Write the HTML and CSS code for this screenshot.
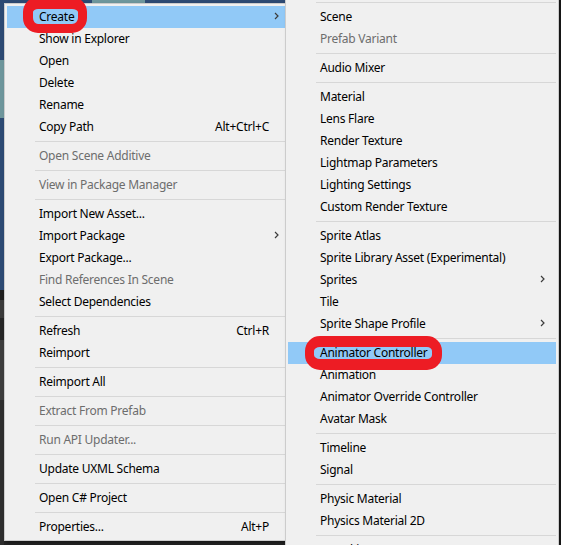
FILE: index.html
```html
<!DOCTYPE html>
<html>
<head>
<meta charset="utf-8">
<link rel="stylesheet" href="styles.css">
</head>
<body>
<div class="screen">
  <div class="menu main">
    <div class="item hl"><span class="label">Create</span><svg class="arrow" width="5" height="8" viewBox="0 0 5 8"><polyline points="1,1 4,4 1,7"/></svg></div>
    <div class="item"><span class="label">Show in Explorer</span></div>
    <div class="item"><span class="label">Open</span></div>
    <div class="item"><span class="label">Delete</span></div>
    <div class="item"><span class="label">Rename</span></div>
    <div class="item"><span class="label">Copy Path</span><span class="key">Alt+Ctrl+C</span></div>
    <div class="sep"></div>
    <div class="item off"><span class="label">Open Scene Additive</span></div>
    <div class="sep"></div>
    <div class="item off"><span class="label">View in Package Manager</span></div>
    <div class="sep"></div>
    <div class="item"><span class="label">Import New Asset...</span></div>
    <div class="item"><span class="label">Import Package</span><svg class="arrow" width="5" height="8" viewBox="0 0 5 8"><polyline points="1,1 4,4 1,7"/></svg></div>
    <div class="item"><span class="label">Export Package...</span></div>
    <div class="item off"><span class="label">Find References In Scene</span></div>
    <div class="item"><span class="label">Select Dependencies</span></div>
    <div class="sep"></div>
    <div class="item"><span class="label">Refresh</span><span class="key">Ctrl+R</span></div>
    <div class="item"><span class="label">Reimport</span></div>
    <div class="sep"></div>
    <div class="item"><span class="label">Reimport All</span></div>
    <div class="sep"></div>
    <div class="item off"><span class="label">Extract From Prefab</span></div>
    <div class="sep"></div>
    <div class="item off"><span class="label">Run API Updater...</span></div>
    <div class="sep"></div>
    <div class="item"><span class="label">Update UXML Schema</span></div>
    <div class="sep"></div>
    <div class="item"><span class="label">Open C# Project</span></div>
    <div class="sep"></div>
    <div class="item"><span class="label">Properties...</span><span class="key">Alt+P</span></div>
  </div>

  <div class="menu sub">
    <div class="sep"></div>
    <div class="item"><span class="label">Scene</span></div>
    <div class="item off"><span class="label">Prefab Variant</span></div>
    <div class="sep"></div>
    <div class="item"><span class="label">Audio Mixer</span></div>
    <div class="sep"></div>
    <div class="item"><span class="label">Material</span></div>
    <div class="item"><span class="label">Lens Flare</span></div>
    <div class="item"><span class="label">Render Texture</span></div>
    <div class="item"><span class="label">Lightmap Parameters</span></div>
    <div class="item"><span class="label">Lighting Settings</span></div>
    <div class="item"><span class="label">Custom Render Texture</span></div>
    <div class="sep"></div>
    <div class="item"><span class="label">Sprite Atlas</span></div>
    <div class="item"><span class="label">Sprite Library Asset (Experimental)</span></div>
    <div class="item"><span class="label">Sprites</span><svg class="arrow" width="5" height="8" viewBox="0 0 5 8"><polyline points="1,1 4,4 1,7"/></svg></div>
    <div class="item"><span class="label">Tile</span></div>
    <div class="item"><span class="label">Sprite Shape Profile</span><svg class="arrow" width="5" height="8" viewBox="0 0 5 8"><polyline points="1,1 4,4 1,7"/></svg></div>
    <div class="sep"></div>
    <div class="item hl"><span class="label">Animator Controller</span></div>
    <div class="item"><span class="label">Animation</span></div>
    <div class="item"><span class="label">Animator Override Controller</span></div>
    <div class="item"><span class="label">Avatar Mask</span></div>
    <div class="sep"></div>
    <div class="item"><span class="label">Timeline</span></div>
    <div class="item"><span class="label">Signal</span></div>
    <div class="sep"></div>
    <div class="item"><span class="label">Physic Material</span></div>
    <div class="item"><span class="label">Physics Material 2D</span></div>
    <div class="sep"></div>
    <div class="item"><span class="label">GUI Skin</span></div>
  </div>

  <div class="mark mark-create"></div>
  <div class="mark mark-anim"></div>
</div>
</body>
</html>
```

FILE: styles.css
```css
html, body {
  margin: 0;
  padding: 0;
}

body {
  width: 561px;
  height: 545px;
  overflow: hidden;
  background-color: #242424;
  background-image:
    linear-gradient(to right, #2d4a73 0 92px, #6e969c 92px 145px, #2d4a73 145px 290px),
    linear-gradient(to bottom, #2d4a73 0 60px, #6e969c 60px 118px, #2d4a73 118px 290px, #1f1f1f 290px 300px, #3a3a3a 300px 318px, #262626 318px 340px, #3d3d3d 340px 400px, #2e2e2e 400px 545px),
    linear-gradient(to right, #242424 0 558px, #1d1d1d 558px 561px);
  background-size: 290px 3px, 4px 545px, 561px 545px;
  background-repeat: no-repeat;
  font-family: "Noto Sans", "Noto Sans CJK KR", sans-serif;
  font-size: 12px;
  letter-spacing: -0.25px;
  color: #000;
}

.screen {
  position: relative;
  width: 561px;
  height: 545px;
  overflow: hidden;
}

.menu {
  box-sizing: border-box;
  background: #f0f0f0;
  border: 1px solid #cccccc;
  padding: 2px;
  box-shadow: 2px 2px 3px rgba(0, 0, 0, 0.35);
}

.main {
  margin: 3px 0 0 4px;
  width: 289px;
}

.sub {
  position: absolute;
  left: 285px;
  top: -4px;
  width: 274px;
}

.item {
  box-sizing: border-box;
  height: 22px;
  display: flex;
  align-items: center;
  padding: 0 11px 2px 32px;
  white-space: nowrap;
}

.item .label {
  flex: 1;
}

.item .key {
  margin-right: 10px;
}

.item.off {
  color: #6d6d6d;
}

.item.hl {
  background: #91c9f7;
}

.arrow {
  display: block;
  fill: none;
  stroke: #3c3c3c;
  stroke-width: 1.2;
}

.sep {
  margin: 3px 0 3px 28px;
  border-top: 1px solid #d7d7d7;
}

.mark {
  position: absolute;
  box-sizing: border-box;
  border-style: solid;
  border-color: #ed1c24;
  border-radius: 15px;
}

.mark-create {
  left: 23px;
  top: -3px;
  width: 64px;
  height: 36px;
  border-width: 12px 9px 9px 10px;
}

.mark-anim {
  left: 305px;
  top: 336px;
  width: 137px;
  height: 34px;
  border-width: 11px 10px 11px 9px;
}
```
